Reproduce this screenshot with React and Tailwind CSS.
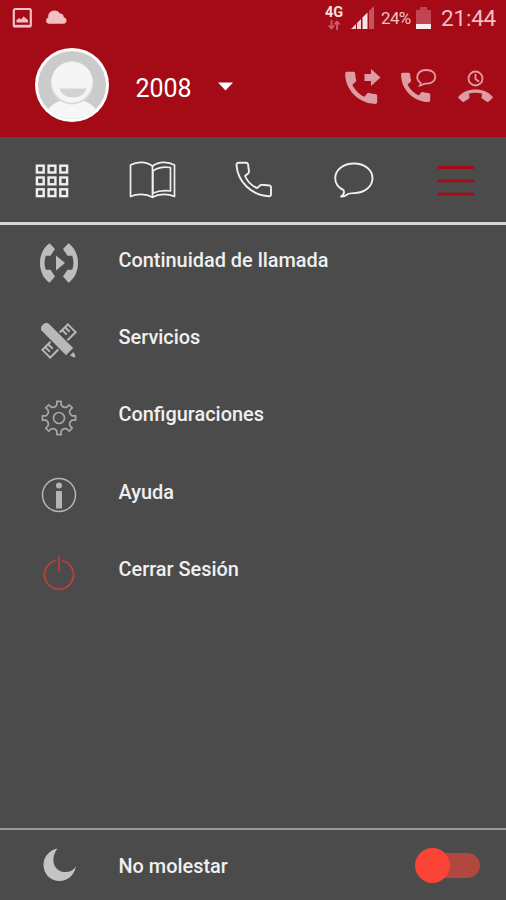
import { useState } from "react";

const PHONE_PATH =
  "M20.01 15.38c-1.23 0-2.42-.2-3.53-.56-.35-.12-.74-.03-1.01.24l-1.57 1.97c-2.83-1.35-5.48-3.9-6.89-6.83l1.95-1.66c.27-.28.35-.67.24-1.02-.37-1.11-.56-2.3-.56-3.53 0-.54-.45-.99-.99-.99H4.19C3.65 3 3 3.24 3 3.99 3 13.28 10.73 21 20.01 21c.71 0 .99-.63.99-1.18v-3.45c0-.54-.45-.99-.99-.99z";

const StatusBar = () => (
  <div className="flex h-9 items-center justify-between pl-3 pr-2.5 text-[#f0c0c5]">
    <div className="flex items-center gap-3">
      <svg width="21" height="22" viewBox="0 0 21 22" fill="none">
        <rect x="1.8" y="2" width="17" height="17.5" rx="1.5" stroke="currentColor" strokeWidth="2.2" />
        <path d="M1.500 17.800h17.500v2.400h-17.500z" fill="currentColor" />
        <path d="M4.500 15.500v-2.500l3-2 1.500 1.500 2.500-3 4.500 3.500v2.500z" fill="currentColor" />
      </svg>
      <svg width="23" height="16" viewBox="0 0 23 16" className="mb-0.5">
        <path d="M3.500 14.800a3.300 3.300 0 0 1-.3-6.300A6.400 6.400 0 0 1 15 4.500a4 4 0 0 1 3.800 3.800 3.400 3.400 0 0 1 .7 6.500z" fill="currentColor" />
      </svg>
    </div>

    <div className="flex items-center">
      <div className="flex w-5 flex-col items-center">
        <span className="text-[14.500px] font-bold leading-[13px] text-[#fbdfe2]">4G</span>
        <svg width="12" height="10" viewBox="0 0 12 10" className="mt-px" fill="none" stroke="#c8606a" strokeWidth="1.800">
          <path d="M3.500 0v8M.8 5.500l2.700 3 2.700-3M9 10V2M6.300 4.500 9 1.500l2.700 3" />
        </svg>
      </div>
      <svg width="23" height="24" viewBox="0 0 23 24" className="ml-[7px]">
        <path d="M0 23 5 18v5z" fill="#f5cfd3" />
        <path d="M6 17l4-4v10H6z" fill="#f5cfd3" />
        <path d="M11.500 11.500l5-5V23h-5z" fill="#f9e2e4" />
        <path d="M18 5l5-5v23h-5z" fill="#c4545f" />
      </svg>
      <span className="ml-[7px] mt-0.5 w-[31px] whitespace-nowrap text-[17px] tracking-[-0.045em]">24%</span>
      <svg width="15" height="23" viewBox="0 0 15 23" className="ml-1">
        <path d="M0 3h4V0h7v3h4v14H0z" fill="#bf4550" />
        <path d="M0 17h15v5H0z" fill="#fdecee" />
      </svg>
      <span className="ml-2.5 text-[22.500px] leading-6 tracking-[-0.01em]">21:44</span>
    </div>
  </div>
);

const Avatar = () => (
  <svg width="74" height="74" viewBox="0 0 74 74">
    <defs>
      <clipPath id="avatar-clip">
        <circle cx="37" cy="37" r="34" />
      </clipPath>
    </defs>
    <circle cx="37" cy="37" r="37" fill="#fdfdfd" />
    <circle cx="37" cy="37" r="34" fill="#cbcbcb" />
    <g clipPath="url(#avatar-clip)">
      <ellipse cx="37" cy="70" rx="27" ry="19" fill="#f7f7f7" />
      <circle cx="37" cy="35" r="21.500" fill="#d9d9d9" />
      <circle cx="37" cy="34" r="20.500" fill="#f5f5f5" />
      <path d="M24.500 40.500h27c-2 6-7 9-13.500 9s-11.500-3-13.500-9z" fill="#d3d3d3" />
    </g>
  </svg>
);

const Header = () => (
  <header className="h-[137px] bg-[#a50b16]">
    <StatusBar />
    <div className="flex h-[98px] items-center pl-[35px] pr-3">
      <Avatar />
      <button className="ml-[26px] mt-1.5 flex items-center gap-[26px] text-white" type="button">
        <span className="mt-px w-[57px] text-[25px] leading-7">2008</span>
        <svg width="15" height="9" viewBox="0 0 15 9" className="-mt-1">
          <path d="M0 .5h15L7.500 8.500z" fill="currentColor" />
        </svg>
      </button>
      <div className="ml-auto mt-1 flex items-center text-[#dd9ca3]">
        <svg width="37" height="36" viewBox="0 0 37 36" fill="currentColor">
          <path d={PHONE_PATH} transform="translate(-5.200 -2.500) scale(1.780)" />
          <path d="M19.500 5H26V0L35.500 8.500 26 17v-5h-6.500z" />
        </svg>
        <svg width="37" height="36" viewBox="0 0 37 36" className="ml-[19px]" fill="currentColor">
          <path d={PHONE_PATH} transform="translate(-4.800 -1) scale(1.620)" />
          <path
            d="M19 16.500c1-1 1-2 .5-2.800-6-4-3.500-12.700 6-12.700 12 0 11.500 13.800 0 13.600-1.700 0-3 .1-4 1-.7.6-1.600.9-2.500.9z"
            fill="none"
            stroke="currentColor"
            strokeWidth="1.800"
          />
        </svg>
        <svg width="36" height="36" viewBox="0 0 36 36" className="ml-5">
          <circle cx="17.500" cy="9.500" r="7" fill="none" stroke="currentColor" strokeWidth="1.800" />
          <path d="M17.500 5v5l3.500 2.800" fill="none" stroke="currentColor" strokeWidth="1.800" />
          <path
            d="M17.500 20.500C10.500 20.500 4.500 23 .5 27.500c-.4.500-.4 1 0 1.500l3.700 3.500c.6.500 1.200.6 1.800.2l4.700-3c.6-.4.800-.9.700-1.500l-.4-3.600c4.200-1.300 8.800-1.300 13 0l-.4 3.600c-.1.600.1 1.100.7 1.500l4.700 3c.6.4 1.200.3 1.800-.2l3.700-3.500c.4-.5.4-1 0-1.500-4-4.500-10-7-17-7z"
            fill="currentColor"
          />
        </svg>
      </div>
    </div>
  </header>
);

const KeypadIcon = () => (
  <svg width="35" height="36" viewBox="0 0 35 36" fill="none" stroke="currentColor" strokeWidth="2.400">
    {[3.7, 15.5, 27.3].map((y) =>
      [1.9, 13.6, 25.300].map((x) => (
        <rect key={`${x}-${y}`} x={x} y={y} width="6.800" height="6.800" />
      ))
    )}
  </svg>
);

const BookIcon = () => (
  <svg width="47" height="38" viewBox="0 0 47 38" fill="none" stroke="currentColor" strokeWidth="1.700" strokeLinejoin="round">
    <path d="M1.500 4C8 .3 17 .3 23.500 5 30 .3 39 .3 45.500 4v31.500c-6.500-3-15.500-3-22 .8-6.500-3.800-15.500-3.800-22-.8z" />
    <path d="M23.800 10c5-3.500 11-4.500 17.700-3.500v23.500c-6.500-.8-12.500 0-17.700 2.200z" />
    <path d="M23.500 5v31" />
  </svg>
);

const CallIcon = () => (
  <svg width="38" height="38" viewBox="0 0 38 38" fill="none" stroke="currentColor" strokeWidth="1.900" strokeLinejoin="round">
    <path d="M3.500 1.800h7.800c.9 0 1.500.5 1.700 1.400l1 7.300c.1.700-.2 1.200-.7 1.700l-3.200 2.800c2 5 6.600 9.700 12 12.100l3.200-2.800c.5-.4 1-.6 1.700-.5l7.500.7c.9.200 1.500.8 1.500 1.600v7.100c0 1.300-.8 2.100-2.100 2C16.500 34.500 2.500 20.500 1.500 3.900c-.1-1.300.7-2.100 2-2.100z" />
  </svg>
);

const ChatIcon = () => (
  <svg width="40" height="38" viewBox="0 0 40 38" fill="none" stroke="currentColor" strokeWidth="1.900" strokeLinejoin="round">
    <path d="M7 35.500c2.500-1.500 3.500-4 2.500-6.300C4.300 26.400 1.200 22 1.200 17.200 1.200 9 9.300 2.500 20 2.500s18.500 6.500 18.500 14.700C38.500 25.500 30.500 32.100 20 32.100c-3 0-5.500.2-7.200 1.700-1.500 1.300-3.700 2-5.800 1.700z" />
  </svg>
);

const MenuIcon = () => (
  <svg width="36" height="32" viewBox="0 0 36 32" stroke="currentColor" strokeWidth="2.800">
    <path d="M0 3.500h36M0 16.800h36M0 30.100h36" />
  </svg>
);

const Tabs = () => (
  <nav className="flex h-[88px] items-center border-b-[3px] border-[#d6d6d6] pl-[35px] pr-8 text-[#efefef]">
    <button aria-label="Teclado" type="button"><KeypadIcon /></button>
    <button aria-label="Contactos" className="ml-[59px]" type="button"><BookIcon /></button>
    <button aria-label="Llamadas" className="ml-[59px]" type="button"><CallIcon /></button>
    <button aria-label="Mensajes" className="ml-[61px]" type="button"><ChatIcon /></button>
    <button aria-label="Menú" className="ml-auto text-[#a50b16]" type="button"><MenuIcon /></button>
  </nav>
);

const ContinuityIcon = () => (
  <svg width="38" height="40" viewBox="0 0 38 40" fill="currentColor">
    <path d="M9.500.2 15 6l-4.500 6.700H5.800c-1.700 4.300-1.700 9.800 0 14.100h4.700L15 33.500l-5.500 6.300C3.500 35.500 0 28.500 0 20S3.500 4.500 9.500.2z" />
    <path d="M28.500.2 23 6l4.500 6.700h4.700c1.700 4.300 1.700 9.800 0 14.100h-4.700L23 33.500l5.500 6.300C34.500 35.500 38 28.500 38 20S34.500 4.500 28.500.2z" />
    <path d="M16 12.500 25 20l-9 7.500z" />
  </svg>
);

const ServicesIcon = () => (
  <svg width="36" height="36" viewBox="0 0 36 36">
    <g transform="rotate(-45 18 18)" fill="none" stroke="currentColor" strokeWidth="2">
      <path d="M11.500 12.500H0v11h11.500M24.500 12.500H36v11H24.500" />
      <path d="M4 12.500v6.500M8 12.500v6.500M28 12.500v6.500M32 12.500v6.500" />
    </g>
    <g transform="rotate(45 18 18)" fill="currentColor">
      <path d="M-1 13h34v10H-1c-3 0-4-2-4-5s1-5 4-5z" />
      <path d="M36 15.500 40.500 17v2L36 20.500z" />
    </g>
  </svg>
);

// eight teeth, 45 degrees apart, joined by inward curves
const gearPoint = (radius, degrees) => {
  const angle = (degrees * Math.PI) / 180;
  return `${(18 + radius * Math.cos(angle)).toFixed(2)} ${(18 + radius * Math.sin(angle)).toFixed(2)}`;
};

const gearPath = [0, 45, 90, 135, 180, 225, 270, 315]
  .map((a, index) =>
    [
      index === 0 ? "M" : "L",
      gearPoint(13.5, a - 9),
      "L",
      gearPoint(16.7, a - 7.5),
      "L",
      gearPoint(16.7, a + 7.5),
      "L",
      gearPoint(13.5, a + 9),
      "Q",
      gearPoint(10.5, a + 22.5),
      gearPoint(13.5, a + 36),
    ].join(" ")
  )
  .join(" ");

const SettingsIcon = () => (
  <svg width="36" height="36" viewBox="0 0 36 36" fill="none" stroke="currentColor" strokeWidth="1.700" strokeLinejoin="round">
    <path d={`${gearPath} Z`} />
    <circle cx="18" cy="18" r="5.500" />
  </svg>
);

const HelpIcon = () => (
  <svg width="36" height="36" viewBox="0 0 36 36">
    <circle cx="18" cy="18" r="16.500" fill="none" stroke="currentColor" strokeWidth="1.500" />
    <circle cx="18" cy="8.500" r="3" fill="currentColor" />
    <path d="M15 14h6v17.500h-6z" fill="currentColor" />
  </svg>
);

const PowerIcon = () => (
  <svg width="36" height="36" viewBox="0 0 36 36" fill="none" stroke="currentColor" strokeWidth="1.700">
    <path d="M21 5.500a14.500 14.500 0 1 1-6 0M18 .5v16" />
  </svg>
);

const menuItems = [
  { label: "Continuidad de llamada", icon: ContinuityIcon, color: "text-[#bdbdbd]" },
  { label: "Servicios", icon: ServicesIcon, color: "text-[#b8b8b8]" },
  { label: "Configuraciones", icon: SettingsIcon, color: "text-[#a6a6a6]" },
  { label: "Ayuda", icon: HelpIcon, color: "text-[#b4b4b4]" },
  { label: "Cerrar Sesión", icon: PowerIcon, color: "text-[#bf4038]" },
];

const App = () => {
  const [dnd, setDnd] = useState(false);

  return (
    <div className="flex h-[900px] w-[506px] flex-col overflow-hidden bg-[#4b4b4b] font-['Roboto',sans-serif]">
      <Header />
      <Tabs />

      <ul className="flex-1">
        {menuItems.map(({ label, icon: Icon, color }) => (
          <li className="flex h-[77.400px] items-center pl-[39px]" key={label}>
            <span className={["mb-px flex w-10 justify-center", color].join(" ")}>
              <Icon />
            </span>
            <span className="mb-[6px] ml-[39.500px] text-[19.900px] font-medium leading-6 text-[#f0f0f0]">
              {label}
            </span>
          </li>
        ))}
      </ul>

      <footer className="flex h-[72px] items-center border-t-2 border-[#9a9a9a] pl-[43px] pr-[26px]">
        <svg width="34" height="34" viewBox="0 0 34 34" className="text-[#c4c4c4]">
          <path d="M14.500.5C6.500 2 .5 8.500.5 17c0 9 7 16 16 16 8 0 14.500-5.500 16.500-14.500-3 4-7 6-12 5.500C11 23 6.500 11 14.500.5z" fill="currentColor" />
        </svg>
        <span className="ml-[41.500px] mt-1 text-[19.900px] font-medium leading-6 text-[#f0f0f0]">
          No molestar
        </span>
        <button
          aria-label="No molestar"
          aria-pressed={dnd}
          className={["ml-auto flex w-[65px] items-center", dnd ? "flex-row-reverse" : ""].join(" ")}
          onClick={() => setDnd(!dnd)}
          type="button"
        >
          <span className="z-10 size-[35px] shrink-0 rounded-full bg-[#fb4436]" />
          <span className="-mx-5 h-[25px] w-[50px] shrink-0 rounded-full bg-[#b24740]" />
        </button>
      </footer>
    </div>
  );
};

export default App;
